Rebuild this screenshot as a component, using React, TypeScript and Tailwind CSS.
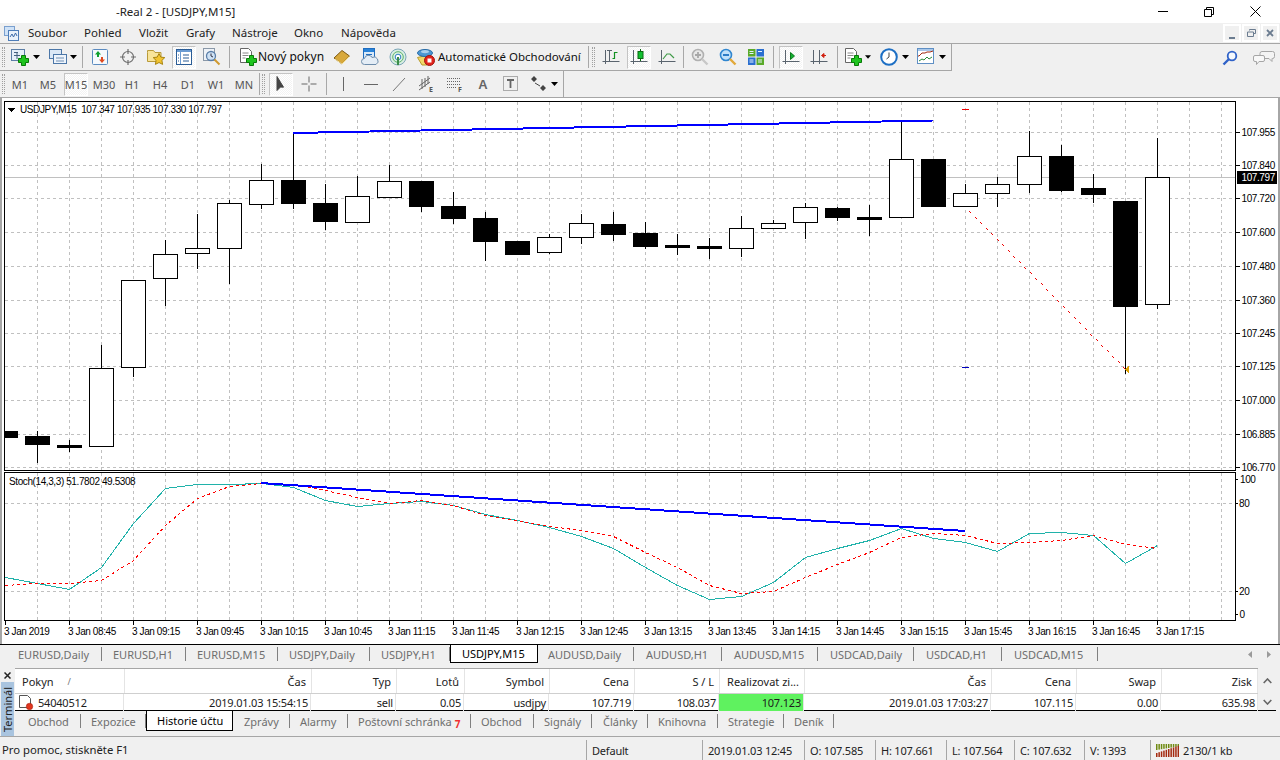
import { FC, ReactNode } from 'react';

// ---- chart data, all coordinates are page pixels ----
// [wick high, body top, body bottom, wick low, bull]
const candles: [number, number, number, number, boolean][] = [
  [431, 431, 437, 437, false],
  [431, 436, 444, 463, false],
  [440, 445, 447, 452, false],
  [345, 368, 446, 446, true],
  [280, 280, 367, 377, true],
  [240, 254, 278, 306, true],
  [214, 248, 253, 269, true],
  [200, 203, 248, 284, true],
  [164, 180, 204, 209, true],
  [132, 180, 203, 209, false],
  [184, 203, 221, 230, false],
  [176, 196, 222, 222, true],
  [165, 181, 197, 197, true],
  [181, 181, 206, 212, false],
  [192, 206, 218, 224, false],
  [212, 218, 241, 261, false],
  [241, 241, 254, 255, false],
  [234, 237, 252, 254, true],
  [214, 223, 237, 244, true],
  [212, 224, 234, 241, false],
  [222, 233, 246, 249, false],
  [234, 245, 247, 255, false],
  [238, 246, 248, 259, false],
  [216, 228, 248, 257, true],
  [220, 223, 228, 229, true],
  [203, 207, 222, 239, true],
  [207, 208, 217, 221, false],
  [205, 217, 219, 236, false],
  [121, 159, 217, 217, true],
  [159, 159, 206, 207, false],
  [184, 193, 206, 207, true],
  [177, 184, 193, 207, true],
  [131, 156, 184, 193, true],
  [145, 156, 190, 192, false],
  [174, 188, 194, 203, false],
  [201, 201, 306, 374, false],
  [138, 177, 304, 309, true],
];

const kLine = [577, 583, 589, 567, 523, 488, 484, 484, 483, 487, 500, 506, 503, 501, 505, 514, 520, 527, 536, 548, 567, 585, 599, 596, 582, 557, 548, 540, 528, 538, 542, 551, 533, 532, 535, 563, 545];
const dLine = [585, 583, 583, 580, 560, 525, 498, 486, 483, 484, 490, 497, 503, 500, 505, 515, 520, 526, 530, 536, 552, 567, 585, 593, 591, 577, 564, 552, 537, 533, 535, 543, 542, 540, 535, 544, 548];

const prices: [string, number][] = [
  ['107.955', 132], ['107.840', 165], ['107.720', 198], ['107.600', 232], ['107.480', 266], ['107.360', 300],
  ['107.245', 333], ['107.125', 366], ['107.000', 400], ['106.885', 434], ['106.770', 467],
];
const times = ['3 Jan 2019', '3 Jan 08:45', '3 Jan 09:15', '3 Jan 09:45', '3 Jan 10:15', '3 Jan 10:45', '3 Jan 11:15', '3 Jan 11:45', '3 Jan 12:15', '3 Jan 12:45', '3 Jan 13:15', '3 Jan 13:45', '3 Jan 14:15', '3 Jan 14:45', '3 Jan 15:15', '3 Jan 15:45', '3 Jan 16:15', '3 Jan 16:45', '3 Jan 17:15'];

const barX = (i: number) => 5 + i * 32;
const toPoints = (ys: number[]) => ys.map((y, i) => `${barX(i) + 0.5},${y + 0.5}`).join(' ');
const vGrid = Array.from({ length: 38 }, (_, i) => 37.5 + i * 32);
// the trade line is a dotted diagonal, 2 pixel stairs about every 5.5 pixels
const tradeDots = Array.from({ length: 29 }, (_, i) => [Math.round(969 + i * 5.5), Math.round(211 + i * 5.57)]);

const Chart: FC = () => (
  <svg viewBox="2 98 1276 546" className="block h-[546px] w-[1276px] bg-white font-['Liberation_Sans',sans-serif] text-[10px] tracking-[-0.4px]" shapeRendering="crispEdges">
    <defs>
      <clipPath id="pane"><rect x="5" y="102" width="1230" height="518" /></clipPath>
    </defs>
    <g stroke="#c0c0c0" strokeDasharray="3 3" clipPath="url(#pane)">
      {vGrid.map(x => <line key={x} x1={x} x2={x} y1="102" y2="470" />)}
      {vGrid.map(x => <line key={x} x1={x} x2={x} y1="473" y2="620" />)}
      {prices.map(([p, y]) => <line key={p} x1="5" x2="1235" y1={y + 0.5} y2={y + 0.5} />)}
      <line x1="5" x2="1235" y1="503.5" y2="503.5" />
      <line x1="5" x2="1235" y1="591.5" y2="591.5" />
    </g>
    <line x1="5" x2="1236" y1="177.5" y2="177.5" stroke="#c0c0c0" />

    <g clipPath="url(#pane)" stroke="#000">
      {candles.map(([hi, top, bot, lo, bull], i) => {
        const x = barX(i) + 0.5;
        return (
          <g key={i}>
            <line x1={x} x2={x} y1={hi} y2={lo} />
            <rect x={x - 12} y={top + 0.5} width="24" height={bot - top} fill={bull ? '#fff' : '#000'} />
          </g>
        );
      })}
    </g>

    <polyline points="293,133 933,120.5" fill="none" stroke="#0000ff" strokeWidth="2" />
    <line x1="962" x2="969" y1="109.5" y2="109.5" stroke="#f00000" />
    <line x1="962" x2="969" y1="367.5" y2="367.5" stroke="#0000c0" />
    <g fill="#f00000">
      {tradeDots.map(([x, y]) => (
        <g key={x}>
          <rect x={x} y={y} width="1" height="1" />
          <rect x={x + 1} y={y + 1} width="1" height="1" />
        </g>
      ))}
    </g>
    <polygon points="1129,366 1129,373 1125,369.5" fill="#e0a000" />

    <g fill="none" clipPath="url(#pane)">
      <polyline points={toPoints(kLine)} stroke="#20b2aa" />
      <polyline points={toPoints(dLine)} stroke="#ff0000" strokeDasharray="3 3" />
    </g>
    <polyline points="261,483 965,531" fill="none" stroke="#0000ff" strokeWidth="2" />

    <g fill="none" stroke="#000">
      <rect x="4.5" y="101.5" width="1231" height="369" />
      <rect x="4.5" y="472.5" width="1231" height="148" />
      {prices.map(([p, y]) => <line key={p} x1="1236" x2="1240" y1={y + 0.5} y2={y + 0.5} />)}
      {[479, 503, 591, 614].map(y => <line key={y} x1="1236" x2="1238" y1={y + 0.5} y2={y + 0.5} />)}
      {times.map((t, i) => <line key={t} x1={barX(i * 2) + 0.5} x2={barX(i * 2) + 0.5} y1="621" y2="625" />)}
    </g>

    <polygon points="8,108 15,108 11.5,112" fill="#000" />
    <g fill="#000">
      <text x="20" y="113">USDJPY,M15&#160;&#160;107.347 107.935 107.330 107.797</text>
      <text x="9" y="485">Stoch(14,3,3) 51.7802 49.5308</text>
      {prices.map(([p, y]) => <text key={p} x="1241.5" y={y + 4}>{p}</text>)}
      <text x="1240" y="483">100</text>
      <text x="1239" y="507">80</text>
      <text x="1239" y="595">20</text>
      <text x="1239.5" y="618">0</text>
      {times.map((t, i) => <text key={t} x={barX(i * 2) - 1} y="635">{t}</text>)}
    </g>
    <rect x="1237" y="171" width="40" height="13" fill="#000" />
    <text x="1241.5" y="181" fill="#fff">107.797</text>
  </svg>
);

// ---- toolbar icons ----
const Plus: FC<{ x?: number; y?: number }> = ({ x = 0, y = 0 }) => (
  <path transform={`translate(${x} ${y})`} d="M3.5 0.5h4v3h3v4h-3v3h-4v-3h-3v-4h3z" fill="#1fc41f" stroke="#087a08" />
);
const Svg: FC<{ size?: number; children: ReactNode }> = ({ size = 18, children }) => (
  <svg width={size} height={size} viewBox="0 0 18 18" className="block shrink-0">{children}</svg>
);
const Down: FC = () => (
  <svg width="7" height="4" viewBox="0 0 7 4" className="block"><path d="M0 0h7L3.5 4z" fill="#000" /></svg>
);

const NewChartIcon = () => <Svg><rect x="0.5" y="1.5" width="13" height="11" fill="#e6eff9" stroke="#5c7ea6" /><path d="M3 4.5h4M3 7.5h6M6 4v7" stroke="#44607f" fill="none" /><Plus x={7} y={7} /></Svg>;
const ProfilesIcon = () => <Svg><rect x="0.5" y="1.5" width="12" height="9" fill="#dbe8f6" stroke="#4c77a8" /><rect x="4.5" y="6.5" width="13" height="9" fill="#eef4fb" stroke="#4c77a8" /><path d="M7 10h8M7 13h8" stroke="#6e8fb5" /></Svg>;
const MarketIcon = () => <Svg><rect x="1.5" y="1.5" width="15" height="15" rx="1" fill="#f5f9fd" stroke="#5b8bc0" /><path d="M7 3l3 3.5H8V9H6V6.5H4z" fill="#10a030" /><path d="M11 15l-3-3.5h2V9h2v2.5h2z" fill="#e04a20" /></Svg>;
const NavIcon = () => <Svg><circle cx="9" cy="9" r="5.5" fill="none" stroke="#6e6e6e" strokeWidth="1.2" /><path d="M9 1v5M9 12v5M1 9h5M12 9h5" stroke="#6e6e6e" strokeWidth="1.2" /></Svg>;
const FolderIcon = () => <Svg><path d="M0.5 4.5V2.5h6l1.5 2h6v9H0.5z" fill="#f8e49a" stroke="#b89a3a" /><path d="M12 5.5l1.8 3.6 4 .5-2.9 2.8.7 4-3.6-1.9-3.6 1.9.7-4-2.9-2.8 4-.5z" fill="#f2c431" stroke="#a88512" /></Svg>;
const DataIcon = () => <Svg><rect x="1.5" y="1.5" width="15" height="15" fill="#fff" stroke="#2a5c96" /><rect x="2" y="2" width="14" height="2" fill="#6a9bd2" /><path d="M5.5 4v12" stroke="#6a9bd2" /><path d="M8 7h6M8 10h6M8 13h6M3 7h1M3 10h1M3 13h1" stroke="#2a5c96" /></Svg>;
const TesterIcon = () => <Svg><rect x="0.5" y="0.5" width="11" height="12" fill="#eef2f7" stroke="#8a98a8" /><circle cx="8" cy="8" r="4.5" fill="#cfe2f5" stroke="#5a7ea8" strokeWidth="1.3" /><path d="M8 5.5V8l2 1" stroke="#334" fill="none" /><path d="M11.5 11.5L16.5 16.5" stroke="#d09a30" strokeWidth="2" /></Svg>;
const OrderIcon = () => <Svg><path d="M1.5 0.5h8l3 3v11h-11z" fill="#fff" stroke="#666" /><path d="M3.5 5h6M3.5 7.5h6M3.5 10h3" stroke="#888" /><Plus x={7} y={7} /></Svg>;
const BookIcon = () => <Svg><path d="M1 10L9 2.5l7.5 5.5L9 16z" fill="#d8a93c" stroke="#7d5a14" /><path d="M2 11l7 5 7.5-7.5" fill="none" stroke="#f3df9c" /></Svg>;
const CloudDocIcon = () => <Svg><rect x="2.5" y="0.5" width="11" height="12" fill="#d9e9f8" stroke="#1f6dc0" /><rect x="3" y="1" width="10" height="3" fill="#2a83d8" /><path d="M5 6.5h6M5 9h6" stroke="#1f6dc0" /><path d="M3.5 16.5a3 3 0 0 1 0-6 4 4 0 0 1 7.5-1 3.6 3.6 0 0 1 4 7z" fill="#e4edf6" stroke="#6d8cab" /></Svg>;
const GlobeIcon = () => <Svg><circle cx="9" cy="9" r="8" fill="#d9eee2" stroke="#7aa5b8" /><circle cx="9" cy="9" r="5.3" fill="none" stroke="#5eb56d" /><circle cx="9" cy="9" r="2.8" fill="#fff" stroke="#2f80c4" /><path d="M9 9v8" stroke="#3b8d4a" strokeWidth="2" /></Svg>;
const AutoIcon = () => <Svg><path d="M0.5 9.5L11 7l5 4-6 6H5z" fill="#f1d86a" stroke="#b79a2c" /><ellipse cx="8" cy="5" rx="7.5" ry="3.5" fill="#4c97d3" stroke="#276aa5" /><ellipse cx="8" cy="3.6" rx="4" ry="1.6" fill="#a9d0ee" /><circle cx="12.5" cy="12.5" r="5" fill="#e3231b" stroke="#a01410" /><rect x="10.5" y="10.5" width="4" height="4" fill="#fff" /></Svg>;
const Axes: FC<{ children?: ReactNode }> = ({ children }) => <Svg><path d="M3.5 2v14M0.5 13.5h17" stroke="#5a646e" fill="none" />{children}</Svg>;
const BarsIcon = () => <Axes><path d="M7.5 2v11M5 2.5h5" stroke="#5a646e" fill="none" /><path d="M10.5 10.5h2V4.5h3" stroke="#109020" fill="none" strokeWidth="1.2" /></Axes>;
const CandleIcon = () => <Axes><path d="M10.5 1v12" stroke="#0a6a10" /><rect x="8" y="3.5" width="5" height="7" fill="#10c030" stroke="#0a6a10" /></Axes>;
const LineIcon = () => <Axes><path d="M5 11l4-5 3 0 4 4" stroke="#3f9a48" strokeWidth="1.2" fill="none" /></Axes>;
const ZoomIcon: FC<{ plus?: boolean }> = ({ plus }) => (
  <Svg>
    <circle cx="7" cy="7" r="5.5" fill={plus ? '#e8e8e8' : '#bfe0fa'} stroke={plus ? '#b0b0b0' : '#2f86d0'} strokeWidth="1.6" />
    <path d={plus ? 'M4 7h6M7 4v6' : 'M4 7h6'} stroke={plus ? '#a8a8a8' : '#1a70c0'} strokeWidth="1.8" />
    <path d="M11 11L16.5 16.5" stroke={plus ? '#c8c8c8' : '#e2a93a'} strokeWidth="2.4" />
  </Svg>
);
const TileIcon = () => <Svg><rect x="1" y="1" width="7.5" height="7.5" fill="#5aaa2a" /><rect x="9.5" y="1" width="7.5" height="7.5" fill="#2b6fd0" /><rect x="1" y="9.5" width="7.5" height="7.5" fill="#2b6fd0" /><rect x="9.5" y="9.5" width="7.5" height="7.5" fill="#5aaa2a" /><path d="M2.5 3.5h4M2.5 5.5h4M11 3.5h4M11 12h4M2.5 12h4M11 14h4M2.5 14h4" stroke="#e6f2ff" /></Svg>;
const ShiftIcon = () => <Axes><path d="M8.5 4.5l4 3.5-4 3.5z" fill="#12b030" stroke="#0a7a1a" /></Axes>;
const ScrollIcon = () => <Svg><path d="M3.5 2v14M0.5 13.5h17M9.5 2v14" stroke="#5a646e" fill="none" /><path d="M16 7.5h-3M14 5.5l-2.5 2 2.5 2z" fill="#d02010" stroke="#d02010" /></Svg>;
const ClockIcon = () => <Svg><circle cx="9" cy="9" r="7.8" fill="#fff" stroke="#1d6fc4" strokeWidth="2" /><path d="M9 4.5V9l-2.5 2" stroke="#444" fill="none" /></Svg>;
const IndicatorIcon = () => <Svg><rect x="0.5" y="0.5" width="16" height="15" fill="#fff" stroke="#5f8fc4" /><rect x="1" y="1" width="15" height="2" fill="#a9c8ea" /><path d="M1 8h1l3-3h3l2-1h3l3-1" stroke="#a02a10" fill="none" /><path d="M2 13l3-2 2 1 3-3 2 2 3-2" stroke="#2a8a3a" fill="none" /></Svg>;
const SearchIcon = () => <svg width="16" height="16" viewBox="0 0 16 16" className="block"><circle cx="10" cy="6" r="4.3" fill="#f4f8fd" stroke="#2f62c8" strokeWidth="1.8" /><path d="M7 9L1.5 14.5" stroke="#2f62c8" strokeWidth="2.4" /></svg>;
const CommentsIcon = () => <svg width="22" height="16" viewBox="0 0 22 16" className="block"><path d="M9 1.5h10.5a2 2 0 0 1 2 2v3a2 2 0 0 1-2 2h-.5v3l-3-3H9a2 2 0 0 1-2-2v-3a2 2 0 0 1 2-2z" fill="#f4f4f4" stroke="#a6a6a6" /><path d="M2 5.5h8a1.5 1.5 0 0 1 1.5 1.5v3A1.5 1.5 0 0 1 10 11.5H6l-2.5 3v-3H2A1.5 1.5 0 0 1 .5 10V7A1.5 1.5 0 0 1 2 5.5z" fill="#f8f8f8" stroke="#a6a6a6" /></svg>;
const AppIcon = () => <svg width="15" height="15" viewBox="0 0 15 15" className="block"><rect x="0.5" y="0.5" width="10" height="9" fill="#cfe2f7" stroke="#7aa0cf" /><rect x="4.5" y="4.5" width="10" height="10" fill="#eaf2fb" stroke="#4e7db8" /><path d="M6 11l2-3 1.5 3 2-4 1.5 3" stroke="#3c6aa8" fill="none" /></svg>;

const CursorIcon = () => <Svg><path d="M5 1.5v14l3.5-3.5 3 .2L5 1.5z" fill="#444" stroke="#444" /></Svg>;
const CrossIcon = () => <Svg><path d="M9 1.5v6M9 10.5v6M1.5 9h6M10.5 9h6" stroke="#666" /></Svg>;
const VLine = () => <Svg><path d="M9.5 2v14" stroke="#666" /></Svg>;
const HLine = () => <Svg><path d="M2 9.5h14" stroke="#666" /></Svg>;
const Trend = () => <Svg><path d="M3 16L15 3" stroke="#777" /></Svg>;
const ChannelIcon = () => <Svg><path d="M1 11L12 3M1 15L12 7M4 14V4M7 12V3M10 9V1" stroke="#666" fill="none" /><text x="11" y="17" className="text-[7px] font-bold" fill="#555">E</text></Svg>;
const FiboIcon = () => <Svg><path d="M1 3.5h13M1 6.5h13M1 9.5h13M1 12.5h9" stroke="#666" strokeDasharray="1 1" /><text x="12" y="17" className="text-[7px] font-bold" fill="#555">F</text></Svg>;
const TextA = () => <span className="font-['Liberation_Sans',sans-serif] text-[13px] leading-none font-bold text-[#666]">A</span>;
const TextT = () => <Svg><rect x="1.5" y="1.5" width="14" height="14" fill="none" stroke="#666" strokeDasharray="1 1" /><path d="M5 5h7M8.5 5v8" stroke="#666" strokeWidth="1.8" /></Svg>;
const ArrowsIcon = () => <Svg><path d="M1 4l3-3 3 3-3 3zM10 13l3-3 3 3-3 3z" fill="#444" /><path d="M5 8l5 3" stroke="#444" /></Svg>;

// ---- toolbar pieces ----
const Slot: FC<{ className?: string; active?: boolean; children: ReactNode }> = ({ className = 'w-[28px]', active, children }) => (
  <div
    className={`flex h-[23px] shrink-0 items-center justify-center ${
      active
        ? 'mx-[2px] w-[24px] border border-t-[#c4c4c4] border-r-white border-b-white border-l-[#c4c4c4] bg-[image:repeating-conic-gradient(#ffffff_0_25%,#f3f3f3_0_50%)] bg-[length:2px_2px]'
        : className
    }`}
  >
    {children}
  </div>
);
const Sep: FC<{ className: string }> = ({ className }) => (
  <div className={`flex h-[22px] shrink-0 items-center justify-center ${className}`}>
    <div className="h-[22px] w-px bg-[#a8a8a8]" />
  </div>
);
const Grip: FC<{ className: string }> = ({ className }) => (
  <div className={`flex h-[22px] shrink-0 items-center ${className}`}>
    <div className="h-[20px] w-[3px] border-x border-dotted border-[#a0a0a0]" />
  </div>
);

const timeframes = ['M1', 'M5', 'M15', 'M30', 'H1', 'H4', 'D1', 'W1', 'MN'];

const chartTabs = [
  { t: 'EURUSD,Daily', w: 'w-[96px] pl-[12px]' },
  { t: 'EURUSD,H1', w: 'w-[84px] pl-[11px]' },
  { t: 'EURUSD,M15', w: 'w-[92px] pl-[11px]' },
  { t: 'USDJPY,Daily', w: 'w-[92px] pl-[11px]' },
  { t: 'USDJPY,H1', w: 'w-[80px] pl-[11px]' },
  { t: 'USDJPY,M15', w: 'w-[88px] pl-[11px]', active: true },
  { t: 'AUDUSD,Daily', w: 'w-[96px] pl-[10px]' },
  { t: 'AUDUSD,H1', w: 'w-[88px] pl-[12px]' },
  { t: 'AUDUSD,M15', w: 'w-[96px] pl-[12px]' },
  { t: 'USDCAD,Daily', w: 'w-[96px] pl-[12px]' },
  { t: 'USDCAD,H1', w: 'w-[88px] pl-[12px]' },
  { t: 'USDCAD,M15', w: 'w-[96px] pl-[12px]' },
];

const termTabs = [
  { t: 'Obchod', w: 'w-[66px] pl-[13px]' },
  { t: 'Expozice', w: 'w-[65px] pl-[10px]' },
  { t: 'Historie účtu', w: 'w-[87px] pl-[10px]', active: true },
  { t: 'Zprávy', w: 'w-[57px] pl-[11px]' },
  { t: 'Alarmy', w: 'w-[58px] pl-[10px]' },
  { t: 'Poštovní schránka', w: 'w-[123px] pl-[10px]', badge: '7' },
  { t: 'Obchod', w: 'w-[63px] pl-[10px]' },
  { t: 'Signály', w: 'w-[58px] pl-[10px]' },
  { t: 'Články', w: 'w-[56px] pl-[11px]' },
  { t: 'Knihovna', w: 'w-[70px] pl-[10px]' },
  { t: 'Strategie', w: 'w-[66px] pl-[10px]' },
  { t: 'Deník', w: 'w-[50px] pl-[10px]' },
];

const Tab: FC<{ t: string; w: string; active?: boolean; badge?: string; tall?: boolean }> = ({ t, w, active, badge, tall }) => (
  <div
    className={`flex shrink-0 items-center text-[11px] whitespace-nowrap ${w} ${tall ? 'h-[20px]' : 'h-[18px]'} ${
      active ? 'border-x border-b border-black bg-white text-black' : 'text-[#6e6e6e]'
    }`}
  >
    <span>{t}</span>
    {badge && <span className="mt-[6px] ml-[3px] text-[10px] leading-none font-bold text-[#f03030]">{badge}</span>}
    {!active && <span className="ml-auto h-[14px] w-px bg-[#808080]" />}
  </div>
);

const headers = ['Pokyn', 'Čas', 'Typ', 'Lotů', 'Symbol', 'Cena', 'S / L', 'Realizovat zi...', 'Čas', 'Cena', 'Swap', 'Zisk'];
const cells = ['54040512', '2019.01.03 15:54:15', 'sell', '0.05', 'usdjpy', '107.719', '108.037', '107.123', '2019.01.03 17:03:27', '107.115', '0.00', '635.98'];

const statusCells = [
  { t: 'Default', w: 'w-[116px]' },
  { t: '2019.01.03 12:45', w: 'w-[102px]' },
  { t: 'O: 107.585', w: 'w-[71px]' },
  { t: 'H: 107.661', w: 'w-[71px]' },
  { t: 'L: 107.564', w: 'w-[68px]' },
  { t: 'C: 107.632', w: 'w-[70px]' },
  { t: 'V: 1393', w: 'w-[66px]' },
];

const App: FC = () => {
  return (
    <div className="flex h-[760px] w-[1280px] flex-col overflow-hidden bg-[#f0f0f0] font-['Noto_Sans',sans-serif] text-[11.5px] leading-none text-[#1c1c1c]">
      {/* title bar */}
      <div className="flex h-[23px] shrink-0 items-center bg-white pl-[116px] text-[#222]">
        <span className="mt-[1px] whitespace-nowrap">-Real 2 - [USDJPY,M15]</span>
        <div className="ml-auto flex pr-[2px]">
          <div className="flex h-[22px] w-[46px] items-center justify-center"><div className="h-px w-[10px] bg-black" /></div>
          <div className="flex h-[22px] w-[46px] items-center justify-center">
            <svg width="10" height="10" viewBox="0 0 10 10"><path d="M2.5 2.5V.5h7v7h-2M.5 2.5h7v7h-7z" fill="none" stroke="#000" /></svg>
          </div>
          <div className="flex h-[22px] w-[46px] items-center justify-center">
            <svg width="11" height="11" viewBox="0 0 11 11"><path d="M.5.5l10 10M10.5.5l-10 10" stroke="#000" /></svg>
          </div>
        </div>
      </div>

      {/* menu */}
      <div className="flex h-[21px] shrink-0 items-center border-b border-[#a6a6a6] text-[#222]">
        <div className="flex w-[28px] justify-start pl-[4px]"><AppIcon /></div>
        <div className="w-[56px]">Soubor</div>
        <div className="w-[55px]">Pohled</div>
        <div className="w-[47px]">Vložit</div>
        <div className="w-[46px]">Grafy</div>
        <div className="w-[62px]">Nástroje</div>
        <div className="w-[47px]">Okno</div>
        <div>Nápověda</div>
        <div className="ml-auto flex gap-px pr-[1px]">
          <div className="flex h-[18px] w-[18px] items-end justify-center border-2 border-white pb-[1px]"><div className="h-[2px] w-[6px] bg-[#6b7c90]" /></div>
          <div className="flex h-[18px] w-[18px] items-center justify-center border-2 border-white">
            <svg width="9" height="8" viewBox="0 0 9 8"><path d="M2.5 1.5V.5h6v4h-2M.5 3h6v4.5h-6z" fill="none" stroke="#6b7c90" /></svg>
          </div>
          <div className="flex h-[18px] w-[18px] items-center justify-center border-2 border-white">
            <svg width="8" height="8" viewBox="0 0 8 8"><path d="M1 1l6 6M7 1L1 7" stroke="#6b7c90" strokeWidth="1.8" /></svg>
          </div>
        </div>
      </div>

      {/* standard toolbar */}
      <div className="flex h-[27px] shrink-0 items-center">
        <div className="flex h-[27px] w-[952px] shrink-0 items-center border-r border-b border-[#a6a6a6]">
          <Grip className="w-[8px] pl-[2px]" />
          <Slot className="w-[23px]"><NewChartIcon /></Slot>
          <Slot className="w-[10px]"><Down /></Slot>
          <Slot className="w-[27px] pl-[7px]"><ProfilesIcon /></Slot>
          <Slot className="w-[10px]"><Down /></Slot>
          <Sep className="w-[8px]" />
          <Slot><MarketIcon /></Slot>
          <Slot><NavIcon /></Slot>
          <Slot><FolderIcon /></Slot>
          <Slot active><DataIcon /></Slot>
          <Slot><TesterIcon /></Slot>
          <Sep className="w-[6px]" />
          <div className="flex h-[23px] w-[96px] shrink-0 items-center gap-[1px] pl-[7px] text-[12px] whitespace-nowrap text-[#111]"><OrderIcon /><span>Nový pokyn</span></div>
          <Slot><BookIcon /></Slot>
          <Slot><CloudDocIcon /></Slot>
          <Slot><GlobeIcon /></Slot>
          <div className="flex h-[23px] w-[174px] shrink-0 items-center gap-[3px] pl-[5px] whitespace-nowrap text-[#111]"><AutoIcon /><span>Automatické Obchodování</span></div>
          <Sep className="w-[4px]" />
          <Grip className="w-[7px] pl-[2px]" />
          <Slot><BarsIcon /></Slot>
          <Slot active><CandleIcon /></Slot>
          <Slot><LineIcon /></Slot>
          <Sep className="w-[5px]" />
          <Slot><ZoomIcon plus /></Slot>
          <Slot><ZoomIcon /></Slot>
          <Slot><TileIcon /></Slot>
          <Sep className="w-[7px]" />
          <Slot active><ShiftIcon /></Slot>
          <Slot><ScrollIcon /></Slot>
          <Sep className="w-[8px]" />
          <Slot className="w-[24px]"><OrderIcon /></Slot>
          <Slot className="w-[6px]"><Down /></Slot>
          <Slot className="w-[30px] pl-[6px]"><ClockIcon /></Slot>
          <Slot className="w-[8px]"><Down /></Slot>
          <Slot className="w-[29px] pl-[5px]"><IndicatorIcon /></Slot>
          <Slot className="w-[8px]"><Down /></Slot>
        </div>
        <div className="ml-auto flex items-center gap-[15px] pr-[5px]">
          <SearchIcon />
          <CommentsIcon />
        </div>
      </div>

      {/* timeframes and line studies */}
      <div className="flex h-[27px] shrink-0 items-center border-b border-[#a6a6a6]">
        <div className="flex h-[26px] w-[564px] shrink-0 items-center border-r border-[#a6a6a6] text-[11px] text-[#555]">
          <Grip className="w-[6px] pl-[2px]" />
          {timeframes.map(t => <Slot key={t} active={t === 'M15'}>{t}</Slot>)}
          <Sep className="w-[2px]" />
          <Grip className="w-[7px] pl-[2px]" />
          <Slot active><CursorIcon /></Slot>
          <Slot><CrossIcon /></Slot>
          <Sep className="w-[6px]" />
          <Slot><VLine /></Slot>
          <Slot><HLine /></Slot>
          <Slot><Trend /></Slot>
          <Slot><ChannelIcon /></Slot>
          <Slot><FiboIcon /></Slot>
          <Slot><TextA /></Slot>
          <Slot><TextT /></Slot>
          <Slot className="w-[24px] pl-[4px]"><ArrowsIcon /></Slot>
          <Slot className="w-[10px]"><Down /></Slot>
        </div>
      </div>

      {/* chart window */}
      <div className="h-[546px] shrink-0 border-x-2 border-[#a6a6a6]">
        <Chart />
      </div>

      {/* chart tabs */}
      <div className="flex h-[20px] shrink-0 items-start border-t border-black pl-[6px]">
        {chartTabs.map(tab => <Tab key={tab.t} {...tab} />)}
        <div className="ml-auto flex h-[18px] items-center gap-[15px] pr-[9px]">
          <svg width="4" height="7" viewBox="0 0 4 7"><path d="M4 0v7L0 3.5z" fill="#9a9a9a" /></svg>
          <svg width="4" height="7" viewBox="0 0 4 7"><path d="M0 0v7l4-3.5z" fill="#9a9a9a" /></svg>
        </div>
      </div>

      {/* terminal */}
      <div className="flex h-[73px] shrink-0 border-b border-[#a6a6a6] pt-[4px]">
        <div className="flex w-[15px] shrink-0 flex-col items-center">
          <div className="flex h-[14px] items-center">
            <svg width="7" height="7" viewBox="0 0 7 7"><path d="M.5.5l6 6M6.5.5l-6 6" stroke="#222" strokeWidth="1.5" /></svg>
          </div>
          <div className="flex w-[13px] flex-1 rotate-180 items-center justify-center bg-[#a9c4df] text-[11px] text-[#222] [writing-mode:vertical-rl]">Terminál</div>
        </div>
        <div className="flex min-w-0 flex-1 flex-col">
          <div className="mr-[4px] flex h-[43px] shrink-0 border-b border-black text-[11px]">
            <div className="w-[1243px] shrink-0 border-t border-[#a6a6a6] bg-white">
              <div className="grid h-[25px] grid-cols-[110px_187px_85px_68px_85px_85px_85px_85px_187px_85px_85px_96px] border-b border-[#cfcfcf] text-[#222]">
                {headers.map((h, i) => (
                  <div key={i} className={`flex items-center border-r border-[#e4e4e4] ${i === 0 ? 'pl-[7px]' : 'justify-end pr-[5px]'}`}>
                    {h}
                    {i === 0 && <span className="ml-[14px] text-[9px] text-[#777]">/</span>}
                  </div>
                ))}
              </div>
              <div className="grid h-[17px] grid-cols-[109px_187px_85px_68px_85px_85px_85px_85px_187px_85px_85px_97px] tracking-[-0.2px]">
                {cells.map((c, i) => (
                  <div
                    key={i}
                    className={`flex items-center border-r border-[#e4e4e4] ${i === 0 ? 'gap-[4px] pl-[4px]' : 'justify-end pr-[2px]'} ${i === 7 ? 'bg-[#5ff25f]' : ''}`}
                  >
                    {i === 0 && (
                      <svg width="15" height="15" viewBox="0 0 15 15">
                        <path d="M.5.5h8l3 3v9h-11z" fill="#fff" stroke="#555" />
                        <circle cx="10.5" cy="11.5" r="3.2" fill="#e2361e" stroke="#a52010" strokeWidth="0.6" />
                      </svg>
                    )}
                    {c}
                  </div>
                ))}
              </div>
            </div>
            <div className="flex flex-1 flex-col items-center">
              <div className="flex h-[25px] items-center">
                <svg width="9" height="6" viewBox="0 0 9 6"><path d="M.7 5L4.5 1 8.3 5" fill="none" stroke="#666" strokeWidth="1.6" /></svg>
              </div>
              <div className="flex h-[17px] items-center">
                <svg width="9" height="6" viewBox="0 0 9 6"><path d="M.7 1l3.8 4 3.8-4" fill="none" stroke="#666" strokeWidth="1.6" /></svg>
              </div>
            </div>
          </div>
          <div className="flex h-[21px] shrink-0 items-start">
            {termTabs.map((tab, i) => <Tab key={i} tall {...tab} />)}
          </div>
        </div>
      </div>

      {/* status bar */}
      <div className="flex min-h-0 flex-1 items-end text-[11px] tracking-[-0.2px] text-[#222]">
        <div className="flex h-[20px] w-[586px] shrink-0 items-center pl-[2px] text-[11.3px] tracking-normal">Pro pomoc, stiskněte F1</div>
        {statusCells.map(c => (
          <div key={c.t} className={`flex h-[20px] shrink-0 items-center border-l border-[#a6a6a6] pl-[5px] whitespace-nowrap ${c.w}`}>{c.t}</div>
        ))}
        <div className="flex h-[20px] items-center gap-[4px] border-l border-[#a6a6a6] pl-[5px]">
          <svg width="23" height="14" viewBox="0 0 23 14">
            {Array.from({ length: 10 }, (_, i) => (
              <g key={i}>
                <rect x={i * 2.4} y="1" width="1.5" height={6 - i * 0.4} fill="#6f8a12" />
                <rect x={i * 2.4} y={10 - i * 0.8} width="1.5" height={4 + i * 0.8} fill="#a42a10" />
              </g>
            ))}
          </svg>
          <span className="whitespace-nowrap">2130/1 kb</span>
        </div>
      </div>
    </div>
  );
};

export default App;
